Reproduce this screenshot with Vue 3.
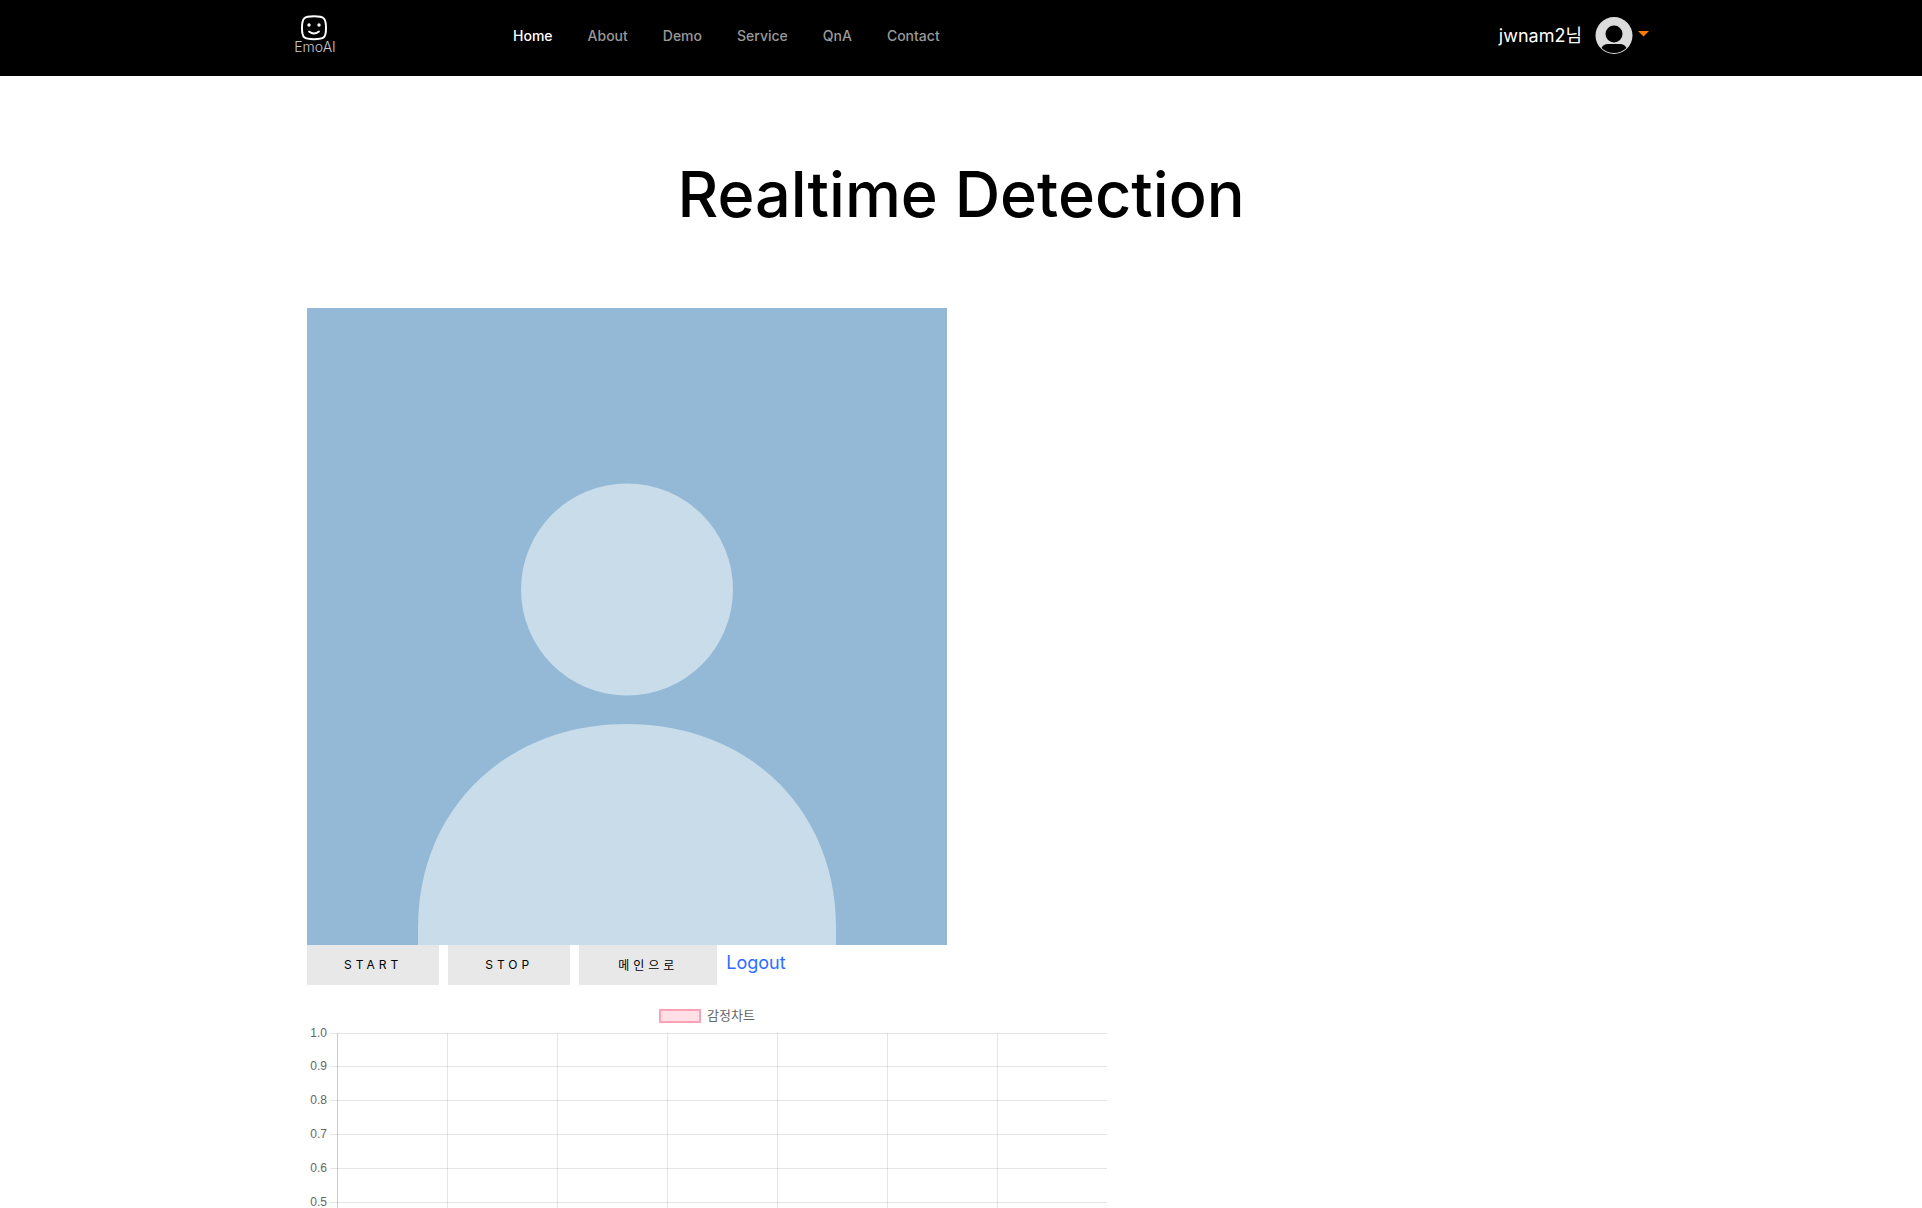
<script setup>
const links = ['Home', 'About', 'Demo', 'Service', 'QnA', 'Contact']
const ticks = [
  { label: '1.0', y: 11 },
  { label: '0.9', y: 44 },
  { label: '0.8', y: 78 },
  { label: '0.7', y: 112 },
  { label: '0.6', y: 146 },
  { label: '0.5', y: 180 },
]
const columns = [140, 250, 360, 470, 580, 690]
</script>

<template>
  <div class="page">
    <header class="topbar">
      <div class="bar">
        <a class="logo" href="#">
          <svg width="28" height="26" viewBox="0 0 28 26" fill="none" stroke="#fff" stroke-linecap="round">
            <path d="M13 1.300C23 1.300 25 3 25 13S23 24.200 13 24.200 1 23 1 13 3 1.300 13 1.300Z" stroke-width="2" />
            <path d="M8 16.500Q13 20.500 18 16.500" stroke-width="1.800" />
            <circle cx="8" cy="10" r="1.700" fill="#fff" stroke="none" />
            <circle cx="18" cy="10" r="1.700" fill="#fff" stroke="none" />
          </svg>
          <span>EmoAI</span>
        </a>
        <nav class="nav">
          <a v-for="(l, i) in links" :key="l" href="#" :class="{ active: i === 0 }">{{ l }}</a>
        </nav>
        <button class="user" type="button">
          <span>jwnam2님</span>
          <svg class="avatar" width="38" height="38" viewBox="0 0 38 38">
            <circle cx="19" cy="18.500" r="18.500" fill="#dcdcdc" />
            <circle cx="19" cy="17" r="8.500" fill="#000" />
            <path d="M6.500 31C8 28 10 27 13 27H25C28 27 30 28 31.500 31Q26 36 19 36T6.500 31Z" fill="#000" />
          </svg>
          <svg class="caret" width="11" height="6" viewBox="0 0 11 6"><path d="M0 0H11L5.500 5.500Z" fill="#ff7a00" /></svg>
        </button>
      </div>
    </header>

    <main class="content">
      <h1>Realtime Detection</h1>

      <svg class="portrait" viewBox="0 0 640 637" role="img" aria-label="Profile">
        <rect width="640" height="637" fill="#93b9d7" />
        <circle cx="320" cy="281.500" r="106" fill="#c9dcea" />
        <path d="M111 637V620C111 500 200 416 320 416S529 500 529 620V637Z" fill="#c9dcea" />
      </svg>

      <div class="actions">
        <button type="button">START</button>
        <button type="button">STOP</button>
        <button type="button" class="home">메인으로</button>
        <a href="#">Logout</a>
      </div>

      <section class="chart">
        <div class="legend"><i></i><span>감정차트</span></div>
        <svg class="plot" viewBox="0 0 800 186">
          <g stroke="#000" stroke-opacity="0.1" shape-rendering="crispEdges">
            <path v-for="t in ticks" :key="t.label" :d="`M23 ${t.y - 0.5}H800`" />
            <path v-for="x in columns" :key="x" :d="`M${x + 0.5} 10V186`" />
            <path d="M30.500 10V186" stroke-opacity="0.2" />
          </g>
          <g class="labels">
            <text v-for="t in ticks" :key="t.label" x="20" :y="t.y + 3">{{ t.label }}</text>
          </g>
        </svg>
      </section>
    </main>
  </div>
</template>

<style>
body {
  margin: 0;
  background: #fff;
}
</style>

<style scoped>
.page {
  font-family: Inter, "Noto Sans CJK KR", sans-serif;
  color: #000;
}
.topbar {
  background: #000;
}
.bar {
  display: flex;
  box-sizing: border-box;
  max-width: 1376px;
  height: 76px;
  margin: 0 auto;
  padding-left: 21px;
}
a {
  text-decoration: none;
}
.logo {
  display: flex;
  flex-direction: column;
  align-items: center;
  width: 42px;
  padding-top: 15px;
  color: #ccc;
  font-size: 14px;
  font-weight: 300;
  line-height: 12px;
}
.nav {
  display: flex;
  gap: 35px;
  margin-left: 177px;
  font-size: 14px;
  font-weight: 500;
  line-height: 72px;
}
.nav a {
  color: #999;
}
.nav a.active {
  color: #fff;
}
.user {
  display: flex;
  align-items: center;
  height: 72px;
  margin-left: auto;
  padding: 0;
  border: 0;
  background: none;
  color: #fff;
  font: inherit;
  font-size: 18px;
  line-height: 20px;
}
.avatar {
  margin-left: 13px;
}
.caret {
  margin: 0 0 4px 5px;
}
.content {
  max-width: 1308px;
  margin: 0 auto;
}
h1 {
  margin: 0;
  padding: 78px 0 74px;
  font-size: 63px;
  font-weight: 500;
  line-height: 80px;
  text-align: center;
}
.portrait {
  display: block;
  width: 640px;
  height: 637px;
}
.actions {
  display: flex;
  gap: 9px;
}
.actions button {
  height: 40px;
  padding: 0 37px 2px;
  border: 0;
  background: #e8e8e8;
  color: #000;
  font: inherit;
  font-size: 12px;
  letter-spacing: 4px;
}
.actions .home {
  padding: 0 39px 2px;
}
.actions a {
  color: #2b6cff;
  font-size: 18px;
  line-height: 36px;
}
.chart {
  width: 800px;
  padding-top: 24px;
  font-family: "Liberation Sans", "Noto Sans CJK KR", sans-serif;
  font-size: 12px;
  color: #666;
}
.legend {
  display: flex;
  align-items: center;
  justify-content: center;
  gap: 6px;
  height: 14px;
  font-size: 13px;
}
.legend i {
  box-sizing: border-box;
  width: 42px;
  height: 14px;
  border: 2px solid #ffa1b5;
  background: #ffe0e6;
}
.legend span {
  padding-bottom: 4px;
}
.plot {
  display: block;
  width: 800px;
  height: 186px;
}
.labels {
  fill: #666;
  text-anchor: end;
}
</style>
